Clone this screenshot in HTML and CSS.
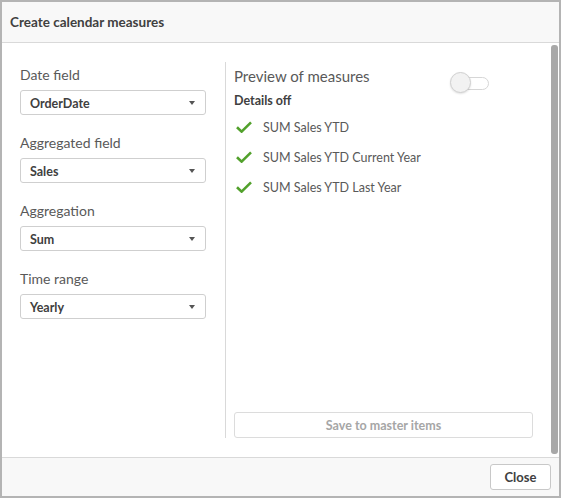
FILE: index.html
```html
<!DOCTYPE html>
<html>
<head>
    <title>Create calendar measures</title>
    <link rel="stylesheet" href="styles.css">
</head>
<body>
    <div class="dialog">
        <div class="dialog-header">Create calendar measures</div>

        <div class="dialog-body">
            <div class="settings">
                <div class="form-group">
                    <label>Date field</label>
                    <div class="dropdown">OrderDate<span class="caret"></span></div>
                </div>
                <div class="form-group">
                    <label>Aggregated field</label>
                    <div class="dropdown">Sales<span class="caret"></span></div>
                </div>
                <div class="form-group">
                    <label>Aggregation</label>
                    <div class="dropdown">Sum<span class="caret"></span></div>
                </div>
                <div class="form-group">
                    <label>Time range</label>
                    <div class="dropdown">Yearly<span class="caret"></span></div>
                </div>
            </div>

            <div class="preview">
                <div class="preview-head">
                    <h2>Preview of measures</h2>
                    <div class="toggle"><span class="knob"></span></div>
                </div>
                <div class="details">Details off</div>
                <ul class="measures">
                    <li><svg class="check" viewBox="0 0 16 12" width="16" height="12"><path d="M1 6.2 L5.6 10.6 L15 1.4" fill="none" stroke="#52a12c" stroke-width="2.6"/></svg>SUM Sales YTD</li>
                    <li><svg class="check" viewBox="0 0 16 12" width="16" height="12"><path d="M1 6.2 L5.6 10.6 L15 1.4" fill="none" stroke="#52a12c" stroke-width="2.6"/></svg>SUM Sales YTD Current Year</li>
                    <li><svg class="check" viewBox="0 0 16 12" width="16" height="12"><path d="M1 6.2 L5.6 10.6 L15 1.4" fill="none" stroke="#52a12c" stroke-width="2.6"/></svg>SUM Sales YTD Last Year</li>
                </ul>
                <button class="btn save" disabled>Save to master items</button>
            </div>

            <div class="scrollbar"></div>
        </div>

        <div class="dialog-footer">
            <button class="btn close">Close</button>
        </div>
    </div>
</body>
</html>
```

FILE: styles.css
```css
:root {
    --text: #404040;
    --muted: #595959;
    --line: #d9d9d9;
    --panel: #f8f8f8;
}

body {
    margin: 0;
    font-family: Lato, sans-serif;
    color: var(--text);
}

.dialog {
    width: 561px;
    height: 498px;
    box-sizing: border-box;
    border: 2px solid #b4b4b4;
    display: flex;
    flex-direction: column;
    background: white;
}

.dialog-header {
    height: 40px;
    line-height: 40px;
    padding-left: 8px;
    background: var(--panel);
    border-bottom: 1px solid var(--line);
    font-size: 13.5px;
    font-weight: bold;
}

.dialog-body {
    flex: 1;
    position: relative;
    display: flex;
    padding: 19px 0 19px 18px;
}

.settings {
    width: 186px;
    padding-top: 4px;
    margin-right: 19px;
}

.form-group {
    margin-bottom: 19px;
}

label {
    display: block;
    height: 18px;
    line-height: 18px;
    margin-bottom: 6px;
    font-size: 14px;
    color: var(--muted);
}

.dropdown {
    position: relative;
    height: 25px;
    line-height: 25px;
    box-sizing: border-box;
    border: 1px solid #cfcfcf;
    border-radius: 3px;
    padding-left: 9px;
    font-size: 12.5px;
    font-weight: bold;
}

.caret {
    position: absolute;
    right: 10px;
    top: 10px;
    border-left: 3.5px solid transparent;
    border-right: 3.5px solid transparent;
    border-top: 4px solid #555;
}

.preview {
    width: 299px;
    border-left: 1px solid var(--line);
    padding: 4px 0 0 8px;
    display: flex;
    flex-direction: column;
}

.preview-head {
    display: flex;
    align-items: flex-start;
}

h2 {
    margin: 0;
    width: 216px;
    height: 20px;
    line-height: 20px;
    font-size: 15px;
    font-weight: normal;
    color: var(--muted);
}

.toggle {
    position: relative;
    margin-top: 11px;
    width: 30px;
    height: 13px;
    margin-left: 9px;
    box-sizing: border-box;
    border: 1px solid #d6d6d6;
    border-radius: 7px;
    background: white;
}

.knob {
    position: absolute;
    left: -10px;
    top: -6px;
    width: 21px;
    height: 21px;
    box-sizing: border-box;
    border-radius: 50%;
    border: 1px solid #d0d0d0;
    background: #f2f2f2;
    box-shadow: 0 1px 2px rgba(0,0,0,0.12);
}

.details {
    margin-top: 3px;
    height: 16px;
    line-height: 16px;
    font-size: 12.5px;
    font-weight: bold;
}

.measures {
    list-style: none;
    margin: 0;
    padding: 0;
    margin-top: 3px;
}

.measures li {
    display: flex;
    align-items: center;
    height: 30px;
    font-size: 12.5px;
    color: var(--muted);
}

.check {
    margin: 0 11px 0 2px;
}

.btn {
    font-family: inherit;
    font-weight: bold;
    background: white;
    border-radius: 3px;
    cursor: pointer;
}

.save {
    margin-top: auto;
    height: 26px;
    border: 1px solid #dcdcdc;
    color: #a6a6a6;
    font-size: 12.5px;
}

.scrollbar {
    position: absolute;
    right: 1px;
    top: 2px;
    bottom: 3px;
    width: 7px;
    border-radius: 3px;
    background: #a8a8a8;
}

.dialog-footer {
    height: 39px;
    border-top: 1px solid var(--line);
    background: var(--panel);
    display: flex;
    justify-content: flex-end;
    align-items: flex-start;
    padding: 6px 8px 0 0;
    box-sizing: border-box;
}

.close {
    width: 61px;
    height: 26px;
    border: 1px solid #c8c8c8;
    color: var(--text);
    font-size: 13px;
}
```
